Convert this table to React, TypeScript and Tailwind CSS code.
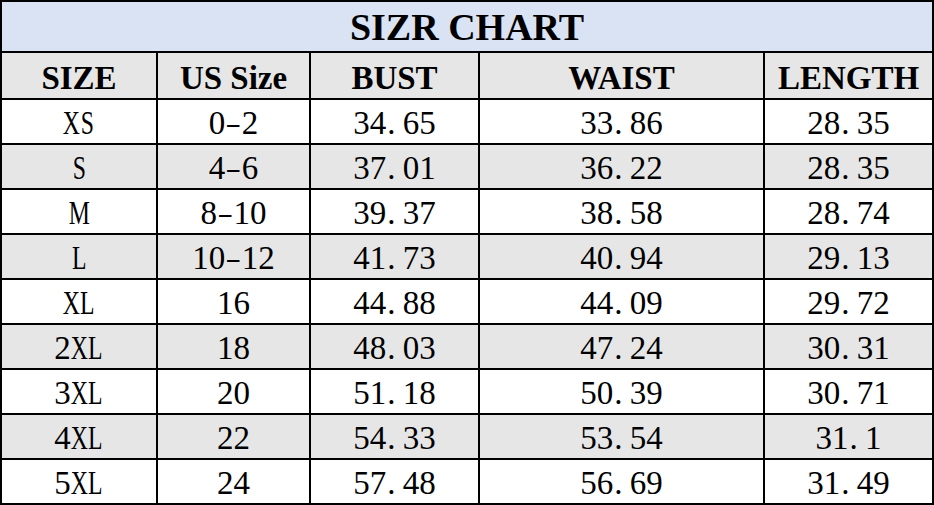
const rows = [
  ["XS", "0-2", "34.65", "33.86", "28.35"],
  ["S", "4-6", "37.01", "36.22", "28.35"],
  ["M", "8-10", "39.37", "38.58", "28.74"],
  ["L", "10-12", "41.73", "40.94", "29.13"],
  ["XL", "16", "44.88", "44.09", "29.72"],
  ["2XL", "18", "48.03", "47.24", "30.31"],
  ["3XL", "20", "51.18", "50.39", "30.71"],
  ["4XL", "22", "54.33", "53.54", "31.1"],
  ["5XL", "24", "57.48", "56.69", "31.49"],
];

const headers = ["SIZE", "US Size", "BUST", "WAIST", "LENGTH"];

// half-width cells like the SimSun-style figures in the chart
function Mono({ text }: { text: string }) {
  return (
    <span className="inline-flex">
      {[...text].map((ch, k) => (
        <span
          key={k}
          className={`inline-flex w-[16.5px] ${ch === "." ? "justify-start pl-[1px]" : "justify-center"} ${
            /[A-Z]/.test(ch) ? "scale-x-[0.72]" : ch === "-" ? "scale-x-[1.45] scale-y-[0.8]" : ""
          }`}
        >
          {ch}
        </span>
      ))}
    </span>
  );
}

export default function App() {
  return (
    <div
      className="w-[934px] h-[505px] bg-black p-[2px] grid grid-cols-[154px_151px_167px_283px_167px] grid-rows-[49px_45px_repeat(9,43px)] gap-[2px] text-black"
      style={{ fontFamily: '"Liberation Serif", "Times New Roman", serif' }}
    >
      <div className="col-span-5 bg-[#dae3f3] flex items-center justify-center text-[38px] font-bold leading-none pt-[1px]">
        SIZR CHART
      </div>
      {headers.map((h) => (
        <div key={h} className="bg-[#e7e6e6] flex items-center justify-center text-[33px] font-bold leading-none pt-[5px]">
          {h}
        </div>
      ))}
      {rows.map((r, i) =>
        r.map((c, j) => (
          <div
            key={`${i}-${j}`}
            className={`${i % 2 === 1 ? "bg-[#e7e6e6]" : "bg-white"} flex items-center justify-center text-[33px] leading-none pt-[4px]`}
          >
            <Mono text={c} />
          </div>
        ))
      )}
    </div>
  );
}
